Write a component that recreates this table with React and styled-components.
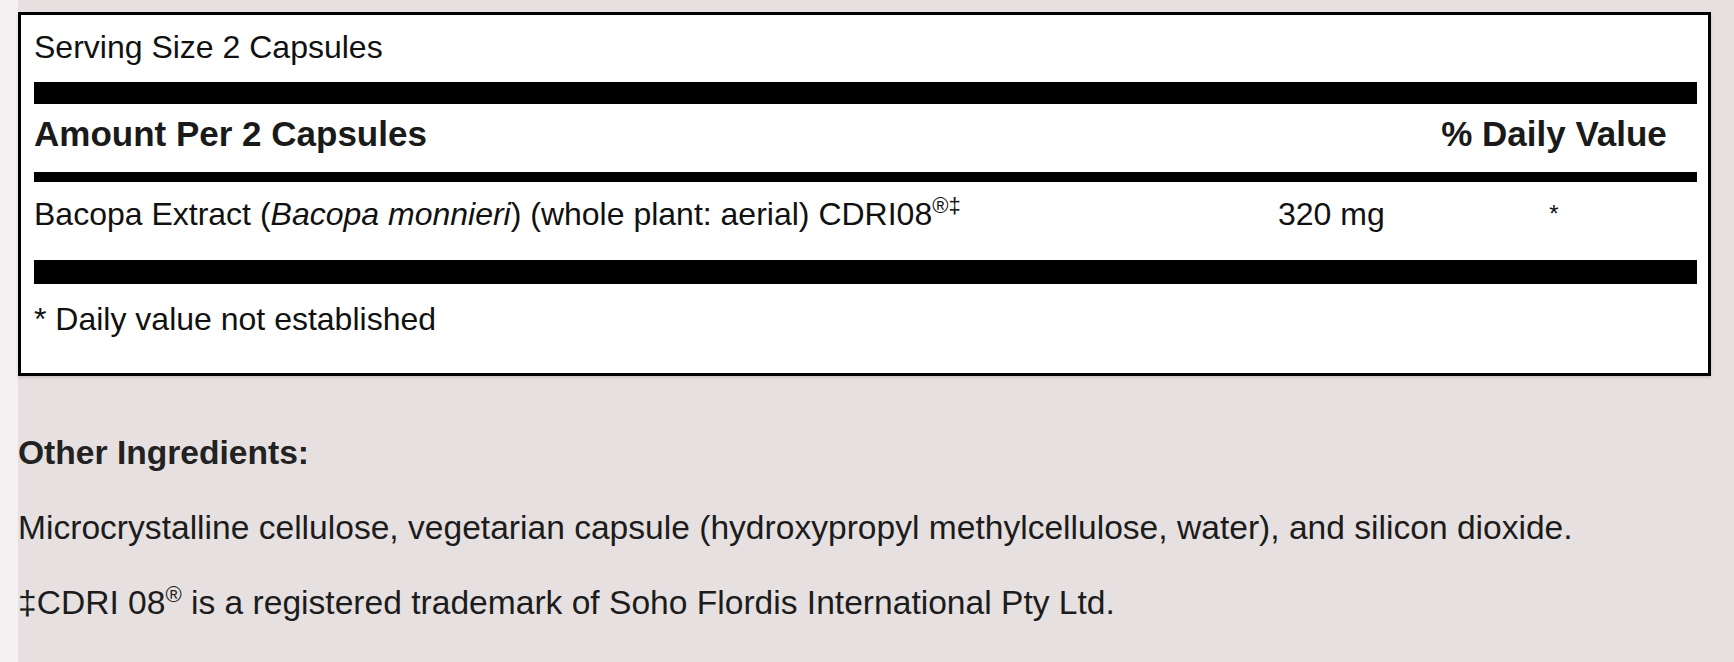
import styled, { createGlobalStyle } from "styled-components";

const GlobalStyle = createGlobalStyle`
  html, body {
    margin: 0;
    padding: 0;
    background: #f3f1f1;
  }
  body {
    font-family: "Liberation Sans", Arial, sans-serif;
    color: #111;
  }
`;

const Page = styled.div`
  margin-left: 18px;
  min-height: 100vh;
  padding: 12px 23px 0 0;
  box-sizing: border-box;
  background: #e6e0e0;
`;

const FactsBox = styled.div`
  width: 1693px;
  box-sizing: border-box;
  background: #fff;
  border: 3px solid #000;
  padding: 0 11px 0 13px;
  box-shadow: 0 2px 3px rgba(0, 0, 0, 0.12);
`;

const Line = styled.div`
  font-size: 32px;
  line-height: 40px;
  color: #111;
  padding: ${(p) => p.$pad};
`;

const Bar = styled.div`
  height: ${(p) => p.$h}px;
  background: #000;
`;

const Row = styled.div`
  display: grid;
  grid-template-columns: 1fr 133px 286px;
  align-items: start;
  padding: ${(p) => p.$pad};
`;

const HeadCell = styled.div`
  font-size: 35px;
  line-height: 44px;
  font-weight: 700;
  color: #1a1a1a;
  grid-column: ${(p) => p.$span || "auto"};
  text-align: ${(p) => p.$align || "left"};
`;

const Cell = styled.div`
  font-size: 32px;
  line-height: 40px;
  color: #111;
  text-align: ${(p) => p.$align || "left"};
  white-space: nowrap;

  em {
    font-style: italic;
  }
`;

const Mark = styled.sup`
  font-size: ${(p) => p.$size || 20}px;
  line-height: 0;
  vertical-align: 12px;
`;

const Star = styled.span`
  font-size: 24px;
  vertical-align: 6px;
`;

const Section = styled.div`
  margin-top: 52px;
  display: flex;
  flex-direction: column;
  gap: 25px;
`;

const Heading = styled.h3`
  margin: 0;
  font-size: 33.6px;
  line-height: 50px;
  font-weight: 700;
  color: #222;
`;

const Para = styled.p`
  margin: 0;
  font-size: 33.6px;
  line-height: 50px;
  color: #1c1c1c;
`;

const App = () => {
  return (
    <>
      <GlobalStyle />
      <Page>
        <FactsBox>
          <Line $pad="12px 0 15px">Serving Size 2 Capsules</Line>
          <Bar $h={22} />
          <Row $pad="8px 0 16px">
            <HeadCell $span="1 / 3">Amount Per 2 Capsules</HeadCell>
            <HeadCell $align="center">% Daily Value</HeadCell>
          </Row>
          <Bar $h={10} />
          <Row $pad="12px 0 23px">
            <Cell>
              Bacopa Extract (<em>Bacopa monnieri</em>) (whole plant: aerial) CDRI08
              <Mark $size={22}>®‡</Mark>
            </Cell>
            <Cell>320 mg</Cell>
            <Cell $align="center">
              <Star>*</Star>
            </Cell>
          </Row>
          <Bar $h={24} />
          <Line $pad="15px 0 34px">* Daily value not established</Line>
        </FactsBox>

        <Section>
          <Heading>Other Ingredients:</Heading>
          <Para>
            Microcrystalline cellulose, vegetarian capsule (hydroxypropyl
            methylcellulose, water), and silicon dioxide.
          </Para>
          <Para>
            ‡CDRI 08<Mark $size={22}>®</Mark> is a registered trademark of Soho
            Flordis International Pty Ltd.
          </Para>
        </Section>
      </Page>
    </>
  );
};

export default App;
